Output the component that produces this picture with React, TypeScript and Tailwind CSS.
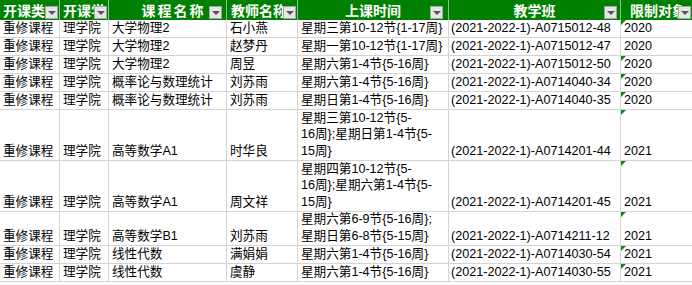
const cols = [
  { title: "开课类", w: "w-[60px]", pad: "pl-[3px] text-left", btn: "right-[1px]" },
  { title: "开课学", w: "w-[49px]", pad: "pl-[3px] text-left", btn: "right-[1px]" },
  { title: "课程名称", w: "w-[118px]", pad: "text-center", btn: "right-[4px]" },
  { title: "教师名称", w: "w-[71px]", pad: "pl-[4px] text-left", btn: "right-[1px]" },
  { title: "上课时间", w: "w-[151px]", pad: "text-center", btn: "right-[5px]" },
  { title: "教学班", w: "w-[172px]", pad: "text-center", btn: "right-[3px]" },
  { title: "限制对象", w: "w-[72px]", pad: "pl-[9px] text-left", btn: "right-[1px]" },
];

type Row = {
  course: string;
  teacher: string;
  time: string[];
  cls: string;
  year: string;
  h: string;
  mark: boolean;
};

const rows: Row[] = [
  { course: "大学物理2", teacher: "石小燕", time: ["星期三第10-12节{1-17周}"], cls: "A0715012-48", year: "2020", h: "h-[18px]", mark: true },
  { course: "大学物理2", teacher: "赵梦丹", time: ["星期一第10-12节{1-17周}"], cls: "A0715012-47", year: "2020", h: "h-[18px]", mark: false },
  { course: "大学物理2", teacher: "周昱", time: ["星期六第1-4节{5-16周}"], cls: "A0715012-50", year: "2020", h: "h-[18px]", mark: true },
  { course: "概率论与数理统计", teacher: "刘苏雨", time: ["星期六第1-4节{5-16周}"], cls: "A0714040-34", year: "2020", h: "h-[18px]", mark: true },
  { course: "概率论与数理统计", teacher: "刘苏雨", time: ["星期日第1-4节{5-16周}"], cls: "A0714040-35", year: "2020", h: "h-[18px]", mark: true },
  { course: "高等数学A1", teacher: "时华良", time: ["星期三第10-12节{5-", "16周};星期日第1-4节{5-", "15周}"], cls: "A0714201-44", year: "2021", h: "h-[51px]", mark: true },
  { course: "高等数学A1", teacher: "周文祥", time: ["星期四第10-12节{5-", "16周};星期六第1-4节{5-", "15周}"], cls: "A0714201-45", year: "2021", h: "h-[51px]", mark: true },
  { course: "高等数学B1", teacher: "刘苏雨", time: ["星期六第6-9节{5-16周};", "星期日第6-8节{5-15周}"], cls: "A0714211-12", year: "2021", h: "h-[34px]", mark: true },
  { course: "线性代数", teacher: "满娟娟", time: ["星期六第1-4节{5-16周}"], cls: "A0714030-54", year: "2021", h: "h-[18px]", mark: true },
  { course: "线性代数", teacher: "虞静", time: ["星期六第1-4节{5-16周}"], cls: "A0714030-55", year: "2021", h: "h-[18px]", mark: true },
];

function FilterButton({ pos }: { pos: string }) {
  return (
    <span
      className={`absolute top-[6px] ${pos} flex h-[13px] w-[13px] items-center justify-center border border-[#a6a6a6] bg-[#e6e6e6]`}
    >
      <span className="h-0 w-0 border-x-[4px] border-t-[4px] border-x-transparent border-t-[#555555]" />
    </span>
  );
}

function Cell({ w, children, mark }: { w: string; children: React.ReactNode; mark?: boolean }) {
  return (
    <div
      className={`relative flex shrink-0 flex-col justify-end overflow-hidden whitespace-nowrap border-r border-b border-[#d4d4d4] pl-[3px] pb-[1px] ${w}`}
    >
      {mark && (
        <span className="absolute top-0 left-0 h-0 w-0 border-t-[5px] border-r-[5px] border-t-[#0a8a0a] border-r-transparent" />
      )}
      {children}
    </div>
  );
}

export default function App() {
  return (
    <div
      className="h-[285px] w-[692px] overflow-hidden bg-white text-[12.6px] leading-[16.5px] text-black"
      style={{ fontFamily: '"Liberation Sans", "Noto Sans CJK SC", sans-serif' }}
    >
      <div className="flex h-[20px] w-max bg-[#008000]">
        {cols.map((c) => (
          <div
            key={c.title}
            className={`relative h-[20px] shrink-0 overflow-hidden whitespace-nowrap border-r border-[#8fbf8f] pt-[1px] text-[14px] leading-[18px] font-bold text-white ${c.w} ${c.pad}`}
            style={{ fontFamily: '"Noto Sans CJK SC", sans-serif' }}
          >
            <span className={c.title === "课程名称" ? "pl-[12px] tracking-[2px]" : ""}>{c.title}</span>
            <FilterButton pos={c.btn} />
          </div>
        ))}
      </div>

      {rows.map((r, i) => (
        <div key={i} className={`flex w-max ${r.h}`}>
          <Cell w={cols[0].w}>重修课程</Cell>
          <Cell w={cols[1].w}>理学院</Cell>
          <Cell w={cols[2].w}>{r.course}</Cell>
          <Cell w={cols[3].w}>{r.teacher}</Cell>
          <Cell w={cols[4].w}>
            {r.time.map((t) => (
              <div key={t}>{t}</div>
            ))}
          </Cell>
          <Cell w={cols[5].w}>
            <span className="-ml-[1px]">(2021-2022-1)-{r.cls}</span>
          </Cell>
          <Cell w={cols[6].w} mark={r.mark}>
            {r.year}
          </Cell>
        </div>
      ))}
    </div>
  );
}
